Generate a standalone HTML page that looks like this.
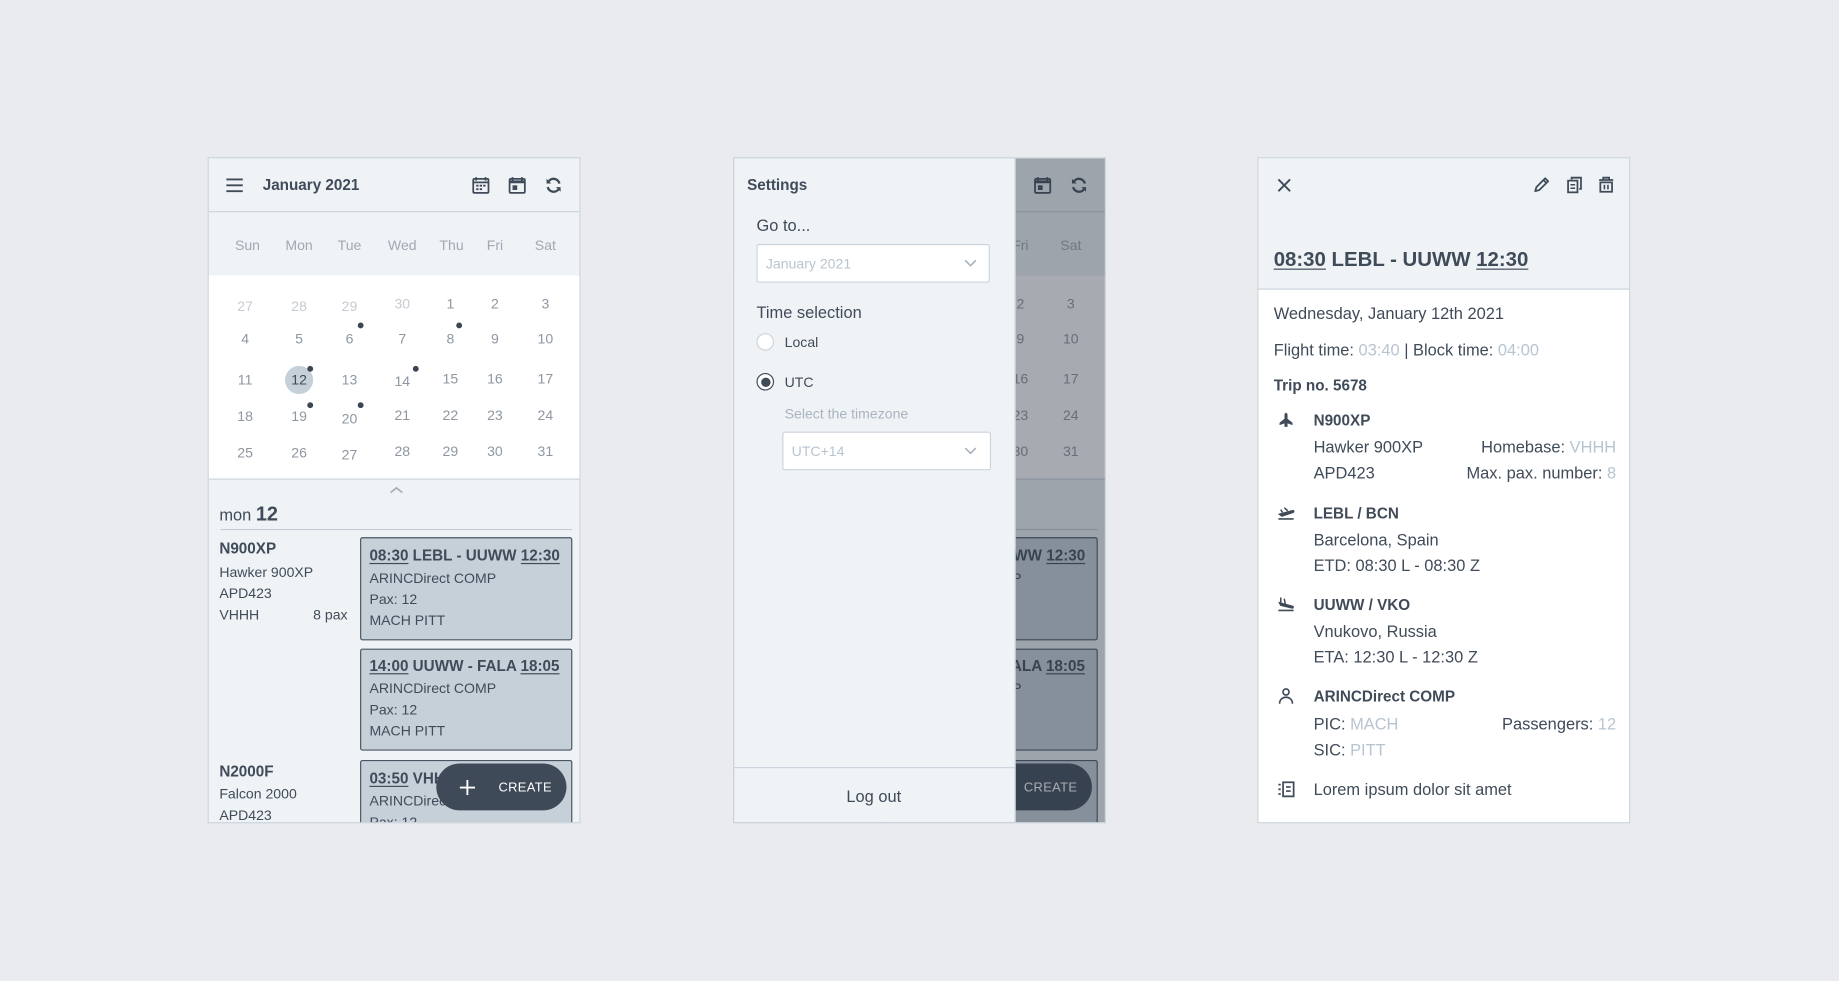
<!DOCTYPE html>
<html><head><meta charset="utf-8"><style>
html,body{margin:0;padding:0;width:1839px;height:980px;overflow:hidden;background:#e9ebee}
#s{position:absolute;left:0;top:0;width:1568px;height:836px;transform:scale(1.17283);transform-origin:0 0;font-family:"Liberation Sans",sans-serif;color:#404b59}
.p{position:absolute;top:134px;width:318px;height:568px;overflow:hidden;background:#eff3f6;border:1px solid #cbd4dc;box-sizing:border-box}
.t{position:absolute;white-space:nowrap;line-height:16px;font-size:12px}
.c{transform:translateX(-50%)}
.b{font-weight:bold}
.l{color:#b8c4cf}
.g{color:#8e97a1}
.r{transform:translateX(-100%)}
.dot{position:absolute;width:5px;height:5px;border-radius:50%;background:#3b4553;margin:-2.5px 0 0 -2.5px}
.card{position:absolute;left:129px;width:181px;background:#c5d0d9;border:1px solid #4a5563;border-radius:2px;box-sizing:border-box}
u{text-decoration:underline;text-underline-offset:2px}
svg{position:absolute}
</style></head><body><div id="s">

<!-- PANEL 1 -->
<div class="p" style="left:177px">
 <div style="position:absolute;left:0;top:45px;width:318px;height:0;border-top:1px solid #cbd4dc"></div>
 <svg style="left:14px;top:16px" width="16" height="14" viewBox="0 0 16 14"><path d="M1 2h14M1 7h14M1 12h14" stroke="#404b59" stroke-width="1.6"/></svg>
 <div class="t b" style="left:46px;top:15px;font-size:13px">January 2021</div>
 <svg style="left:224px;top:15px" width="16" height="16" viewBox="0 0 16 16"><rect x="1.5" y="2.5" width="13" height="12" rx="1" fill="none" stroke="#404b59" stroke-width="1.5"/><path d="M1.5 5.5h13" stroke="#404b59" stroke-width="1.5"/><path d="M4 1v3M12 1v3" stroke="#404b59" stroke-width="1.5"/><g fill="#404b59"><rect x="4" y="7.5" width="2" height="1.6"/><rect x="7" y="7.5" width="2" height="1.6"/><rect x="10" y="7.5" width="2" height="1.6"/><rect x="4" y="10.5" width="2" height="1.6"/><rect x="7" y="10.5" width="2" height="1.6"/></g></svg>
 <svg style="left:255px;top:15px" width="16" height="16" viewBox="0 0 16 16"><rect x="1.5" y="2.5" width="13" height="12" rx="1" fill="none" stroke="#404b59" stroke-width="1.5"/><path d="M1.5 5h13" stroke="#404b59" stroke-width="2.5"/><path d="M4 1v3M12 1v3" stroke="#404b59" stroke-width="1.5"/><rect x="4" y="8" width="4" height="4" fill="#404b59"/></svg>
 <svg style="left:286px;top:15px" width="16" height="16" viewBox="0 0 16 16"><path d="M13 6.5A5.2 5.2 0 0 0 3.5 5M3 9.5a5.2 5.2 0 0 0 9.5 1.5" fill="none" stroke="#404b59" stroke-width="2"/><path d="M2 2.5v4h4zM14 13.5v-4h-4z" fill="#404b59"/></svg>
 <div class="t g c" style="left:33px;top:66px;color:#a0a8b2">Sun</div>
 <div class="t g c" style="left:77px;top:66px;color:#a0a8b2">Mon</div>
 <div class="t g c" style="left:120px;top:66px;color:#a0a8b2">Tue</div>
 <div class="t g c" style="left:165px;top:66px;color:#a0a8b2">Wed</div>
 <div class="t g c" style="left:207px;top:66px;color:#a0a8b2">Thu</div>
 <div class="t g c" style="left:244px;top:66px;color:#a0a8b2">Fri</div>
 <div class="t g c" style="left:287px;top:66px;color:#a0a8b2">Sat</div>
 <div style="position:absolute;left:0;top:100px;width:318px;height:173px;background:#fff"></div>
 <div style="position:absolute;left:65px;top:177px;width:24px;height:24px;border-radius:50%;background:#c5d0d9"></div>
 <div class="t c" style="left:31px;top:118px;color:#c5cbd2">27</div><div class="t c" style="left:77px;top:118px;color:#c5cbd2">28</div><div class="t c" style="left:120px;top:118px;color:#c5cbd2">29</div><div class="t c" style="left:165px;top:116px;color:#c5cbd2">30</div><div class="t g c" style="left:206px;top:116px">1</div><div class="t g c" style="left:244px;top:116px">2</div><div class="t g c" style="left:287px;top:116px">3</div>
 <div class="t g c" style="left:31px;top:146px">4</div><div class="t g c" style="left:77px;top:146px">5</div><div class="t g c" style="left:120px;top:146px">6</div><div class="t g c" style="left:165px;top:146px">7</div><div class="t g c" style="left:206px;top:146px">8</div><div class="t g c" style="left:244px;top:146px">9</div><div class="t g c" style="left:287px;top:146px">10</div>
 <div class="t g c" style="left:31px;top:181px">11</div><div class="t c" style="left:77px;top:181px;color:#404b59">12</div><div class="t g c" style="left:120px;top:181px">13</div><div class="t g c" style="left:165px;top:182px">14</div><div class="t g c" style="left:206px;top:180px">15</div><div class="t g c" style="left:244px;top:180px">16</div><div class="t g c" style="left:287px;top:180px">17</div>
 <div class="t g c" style="left:31px;top:212px">18</div><div class="t g c" style="left:77px;top:212px">19</div><div class="t g c" style="left:120px;top:214px">20</div><div class="t g c" style="left:165px;top:211px">21</div><div class="t g c" style="left:206px;top:211px">22</div><div class="t g c" style="left:244px;top:211px">23</div><div class="t g c" style="left:287px;top:211px">24</div>
 <div class="t g c" style="left:31px;top:243px">25</div><div class="t g c" style="left:77px;top:243px">26</div><div class="t g c" style="left:120px;top:245px">27</div><div class="t g c" style="left:165px;top:242px">28</div><div class="t g c" style="left:206px;top:242px">29</div><div class="t g c" style="left:244px;top:242px">30</div><div class="t g c" style="left:287px;top:242px">31</div>
 <div class="dot" style="left:129px;top:142px"></div><div class="dot" style="left:213px;top:142px"></div><div class="dot" style="left:86px;top:179px"></div><div class="dot" style="left:176px;top:179px"></div><div class="dot" style="left:86px;top:210px"></div><div class="dot" style="left:129px;top:210px"></div>
 <div style="position:absolute;left:0;top:273px;width:318px;border-top:1px solid #cbd4dc"></div>
 <svg style="left:154px;top:279px" width="12" height="8" viewBox="0 0 12 8"><path d="M1 6l5-4 5 4" fill="none" stroke="#a9b2bb" stroke-width="1.5"/></svg>
 <div class="t" style="left:9px;top:295px;font-size:14px;line-height:18px">mon <b style="font-size:17px">12</b></div>
 <div style="position:absolute;left:10px;top:316px;width:300px;border-top:1px solid #c5ced6"></div>
 <div class="t b" style="left:9px;top:325px;font-size:13px">N900XP</div>
 <div class="t" style="left:9px;top:345px">Hawker 900XP</div>
 <div class="t" style="left:9px;top:363px">APD423</div>
 <div class="t" style="left:9px;top:381px">VHHH</div>
 <div class="t" style="left:89px;top:381px">8 pax</div>
 <div class="card" style="top:323px;height:88px"></div>
 <div class="t b" style="left:137px;top:331px;font-size:13px"><u>08:30</u> LEBL - UUWW <u>12:30</u></div>
 <div class="t" style="left:137px;top:350px">ARINCDirect COMP</div>
 <div class="t" style="left:137px;top:368px">Pax: 12</div>
 <div class="t" style="left:137px;top:386px">MACH PITT</div>
 <div class="card" style="top:418px;height:87px"></div>
 <div class="t b" style="left:137px;top:425px;font-size:13px"><u>14:00</u> UUWW - FALA <u>18:05</u></div>
 <div class="t" style="left:137px;top:444px">ARINCDirect COMP</div>
 <div class="t" style="left:137px;top:462px">Pax: 12</div>
 <div class="t" style="left:137px;top:480px">MACH PITT</div>
 <div class="t b" style="left:9px;top:515px;font-size:13px">N2000F</div>
 <div class="t" style="left:9px;top:534px">Falcon 2000</div>
 <div class="t" style="left:9px;top:552px">APD423</div>
 <div class="card" style="top:513px;height:80px"></div>
 <div class="t b" style="left:137px;top:521px;font-size:13px"><u>03:50</u> VHHH - LEBL</div>
 <div class="t" style="left:137px;top:540px">ARINCDirect COMP</div>
 <div class="t" style="left:137px;top:558px">Pax: 12</div>
 <div style="position:absolute;left:194px;top:516px;width:111px;height:40px;border-radius:20px;background:#3f4a58"></div>
 <svg style="left:214px;top:530px" width="13" height="13" viewBox="0 0 13 13"><path d="M6.5 0v13M0 6.5h13" stroke="#fff" stroke-width="1.6"/></svg>
 <div class="t" style="left:247px;top:529px;font-size:11px;color:#fff;letter-spacing:.3px">CREATE</div>
</div>

<!-- PANEL 2 -->
<div class="p" style="left:625px">
 <div style="position:absolute;left:0;top:45px;width:318px;height:0;border-top:1px solid #cbd4dc"></div>
 <svg style="left:255px;top:15px" width="16" height="16" viewBox="0 0 16 16"><rect x="1.5" y="2.5" width="13" height="12" rx="1" fill="none" stroke="#404b59" stroke-width="1.5"/><path d="M1.5 5h13" stroke="#404b59" stroke-width="2.5"/><path d="M4 1v3M12 1v3" stroke="#404b59" stroke-width="1.5"/><rect x="4" y="8" width="4" height="4" fill="#404b59"/></svg>
 <svg style="left:286px;top:15px" width="16" height="16" viewBox="0 0 16 16"><path d="M13 6.5A5.2 5.2 0 0 0 3.5 5M3 9.5a5.2 5.2 0 0 0 9.5 1.5" fill="none" stroke="#404b59" stroke-width="2"/><path d="M2 2.5v4h4zM14 13.5v-4h-4z" fill="#404b59"/></svg>
 <div class="t c" style="left:244px;top:66px;color:#a0a8b2">Fri</div>
 <div class="t c" style="left:287px;top:66px;color:#a0a8b2">Sat</div>
 <div style="position:absolute;left:0;top:100px;width:318px;height:173px;background:#fff"></div>
 <div class="t g c" style="left:244px;top:116px">2</div><div class="t g c" style="left:287px;top:116px">3</div>
 <div class="t g c" style="left:244px;top:146px">9</div><div class="t g c" style="left:287px;top:146px">10</div>
 <div class="t g c" style="left:244px;top:180px">16</div><div class="t g c" style="left:287px;top:180px">17</div>
 <div class="t g c" style="left:244px;top:211px">23</div><div class="t g c" style="left:287px;top:211px">24</div>
 <div class="t g c" style="left:244px;top:242px">30</div><div class="t g c" style="left:287px;top:242px">31</div>
 <div style="position:absolute;left:0;top:273px;width:318px;border-top:1px solid #cbd4dc"></div>
 <div style="position:absolute;left:10px;top:316px;width:300px;border-top:1px solid #c5ced6"></div>
 <div class="card" style="top:323px;height:88px"></div>
 <div class="t b" style="left:137px;top:331px;font-size:13px"><u>08:30</u> LEBL - UUWW <u>12:30</u></div>
 <div class="t" style="left:137px;top:350px">ARINCDirect COMP</div>
 <div class="card" style="top:418px;height:87px"></div>
 <div class="t b" style="left:137px;top:425px;font-size:13px"><u>14:00</u> UUWW - FALA <u>18:05</u></div>
 <div class="t" style="left:137px;top:444px">ARINCDirect COMP</div>
 <div class="card" style="top:513px;height:80px"></div>
 <div style="position:absolute;left:194px;top:516px;width:111px;height:40px;border-radius:20px;background:#3f4a58"></div>
 <div class="t" style="left:247px;top:529px;font-size:11px;color:#fff;letter-spacing:.3px">CREATE</div>
 <div style="position:absolute;left:0;top:0;width:318px;height:568px;background:rgba(45,55,70,0.42)"></div>
 <div style="position:absolute;left:0;top:0;width:239px;height:568px;background:#eff3f6;border-right:1px solid #cbd4dc"></div>
 <div class="t b" style="left:11px;top:15px;font-size:13px">Settings</div>
 <div class="t" style="left:19px;top:48px;font-size:14px;line-height:18px">Go to...</div>
 <div style="position:absolute;left:19px;top:73px;width:199px;height:33px;background:#fff;border:1px solid #cbd4dc;border-radius:2px;box-sizing:border-box"></div>
 <div class="t l" style="left:27px;top:82px">January 2021</div>
 <svg style="left:196px;top:86px" width="11" height="7" viewBox="0 0 11 7"><path d="M1 1l4.5 4.5L10 1" fill="none" stroke="#a9b2bb" stroke-width="1.4"/></svg>
 <div class="t" style="left:19px;top:122px;font-size:14px;line-height:18px">Time selection</div>
 <div style="position:absolute;left:19px;top:149px;width:15px;height:15px;border-radius:50%;background:#fff;border:1px solid #cbd4dc;box-sizing:border-box"></div>
 <div class="t" style="left:43px;top:149px">Local</div>
 <div style="position:absolute;left:19px;top:183px;width:15px;height:15px;border-radius:50%;background:#fff;border:1.5px solid #404b59;box-sizing:border-box"></div>
 <div style="position:absolute;left:22.5px;top:186.5px;width:8px;height:8px;border-radius:50%;background:#404b59"></div>
 <div class="t" style="left:43px;top:183px">UTC</div>
 <div class="t l" style="left:43px;top:210px;color:#a9b4bf">Select the timezone</div>
 <div style="position:absolute;left:41px;top:233px;width:178px;height:33px;background:#fff;border:1px solid #cbd4dc;border-radius:2px;box-sizing:border-box"></div>
 <div class="t l" style="left:49px;top:242px">UTC+14</div>
 <svg style="left:196px;top:246px" width="11" height="7" viewBox="0 0 11 7"><path d="M1 1l4.5 4.5L10 1" fill="none" stroke="#a9b2bb" stroke-width="1.4"/></svg>
 <div style="position:absolute;left:0;top:519px;width:239px;border-top:1px solid #cbd4dc"></div>
 <div class="t c" style="left:119px;top:535px;font-size:14px;line-height:18px">Log out</div>
</div>

<!-- PANEL 3 -->
<div class="p" style="left:1072px;background:#fff">
 <div style="position:absolute;left:0;top:0;width:318px;height:111px;background:#eff3f6;border-bottom:1px solid #cbd4dc"></div>
 <svg style="left:16px;top:17px" width="12" height="12" viewBox="0 0 12 12"><path d="M1 1l10 10M11 1L1 11" stroke="#404b59" stroke-width="1.6"/></svg>
 <svg style="left:234px;top:15px" width="15" height="15" viewBox="0 0 15 15"><path d="M2 13l1-3.5 7.5-7.5 2.5 2.5-7.5 7.5z" fill="none" stroke="#404b59" stroke-width="1.5" stroke-linejoin="round"/><path d="M9 3.5l2.5 2.5" stroke="#404b59" stroke-width="1.5"/></svg>
 <svg style="left:262px;top:15px" width="15" height="15" viewBox="0 0 15 15"><path d="M5 3V1.5h8v9.5h-1.5" fill="none" stroke="#404b59" stroke-width="1.5"/><rect x="2" y="4" width="8" height="10" fill="none" stroke="#404b59" stroke-width="1.5"/><path d="M4 7.5h4M4 10.5h4" stroke="#404b59" stroke-width="1.3"/></svg>
 <svg style="left:289px;top:15px" width="15" height="15" viewBox="0 0 15 15"><path d="M1.5 3.5h12M5 3.5V1.5h5v2" fill="none" stroke="#404b59" stroke-width="1.5"/><rect x="2.5" y="5.5" width="10" height="8" fill="none" stroke="#404b59" stroke-width="1.5"/><path d="M6 7.5v4M9 7.5v4" stroke="#404b59" stroke-width="1.4"/></svg>
 <div class="t b" style="left:13px;top:75px;font-size:17.4px;line-height:22px"><u>08:30</u> LEBL - UUWW <u>12:30</u></div>
 <div class="t" style="left:13px;top:124px;font-size:14px">Wednesday, January 12th 2021</div>
 <div class="t" style="left:13px;top:155px;font-size:14px">Flight time: <span class="l">03:40</span> | Block time: <span class="l">04:00</span></div>
 <div class="t b" style="left:13px;top:186px;font-size:13px">Trip no. 5678</div>
 <svg style="left:16px;top:216px" width="15" height="15" viewBox="0 0 15 15"><path d="M7.5 1c-1 0-1.3 1-1.3 2v10h2.6V3c0-1-.3-2-1.3-2zM6.2 6L2 9.5v2l4.2-1.5M8.8 6l4.2 3.5v2L8.8 10" fill="#404b59"/></svg>
 <div class="t b" style="left:47px;top:216px;font-size:13px">N900XP</div>
 <div class="t" style="left:47px;top:238px;font-size:14px">Hawker 900XP</div>
 <div class="t r" style="left:305px;top:238px;font-size:14px">Homebase: <span class="l">VHHH</span></div>
 <div class="t" style="left:47px;top:260px;font-size:14px">APD423</div>
 <div class="t r" style="left:305px;top:260px;font-size:14px">Max. pax. number: <span class="l">8</span></div>
 <svg style="left:16px;top:295px" width="15" height="14" viewBox="0 0 15 14"><path d="M1 12.5h13" stroke="#404b59" stroke-width="1.4"/><path d="M2 8.5l11-3c1-.3 1.5.8.5 1.3L4 10zM3 4.5l1.5 2.5M6 3l3 2.5" stroke="#404b59" stroke-width="1.3" fill="#404b59"/></svg>
 <div class="t b" style="left:47px;top:295px;font-size:13px">LEBL / BCN</div>
 <div class="t" style="left:47px;top:317px;font-size:14px">Barcelona, Spain</div>
 <div class="t" style="left:47px;top:339px;font-size:14px">ETD: 08:30 L - 08:30 Z</div>
 <svg style="left:16px;top:373px" width="15" height="14" viewBox="0 0 15 14"><path d="M1 12.5h13" stroke="#404b59" stroke-width="1.4"/><path d="M2 6l11 3c1 .3.6 1.5-.4 1.3L3 8zM3 1.5v4.5M6 2.5l1 5" stroke="#404b59" stroke-width="1.3" fill="#404b59"/></svg>
 <div class="t b" style="left:47px;top:373px;font-size:13px">UUWW / VKO</div>
 <div class="t" style="left:47px;top:395px;font-size:14px">Vnukovo, Russia</div>
 <div class="t" style="left:47px;top:417px;font-size:14px">ETA: 12:30 L - 12:30 Z</div>
 <svg style="left:16px;top:451px" width="15" height="15" viewBox="0 0 15 15"><circle cx="7.5" cy="4" r="2.6" fill="none" stroke="#404b59" stroke-width="1.4"/><path d="M2 14c0-3.5 2.5-5.5 5.5-5.5S13 10.5 13 14" fill="none" stroke="#404b59" stroke-width="1.4"/></svg>
 <div class="t b" style="left:47px;top:451px;font-size:13px">ARINCDirect COMP</div>
 <div class="t" style="left:47px;top:474px;font-size:14px">PIC: <span class="l">MACH</span></div>
 <div class="t r" style="left:305px;top:474px;font-size:14px">Passengers: <span class="l">12</span></div>
 <div class="t" style="left:47px;top:496px;font-size:14px">SIC: <span class="l">PITT</span></div>
 <svg style="left:16px;top:531px" width="15" height="14" viewBox="0 0 15 14"><rect x="5" y="1" width="9" height="12" fill="none" stroke="#404b59" stroke-width="1.5"/><path d="M7.5 5h4M7.5 8.5h4" stroke="#404b59" stroke-width="1.4"/><path d="M1 3h2M1 7h2M1 11h2" stroke="#404b59" stroke-width="1.5"/></svg>
 <div class="t" style="left:47px;top:530px;font-size:14px">Lorem ipsum dolor sit amet</div>
</div>
</div></body></html>
